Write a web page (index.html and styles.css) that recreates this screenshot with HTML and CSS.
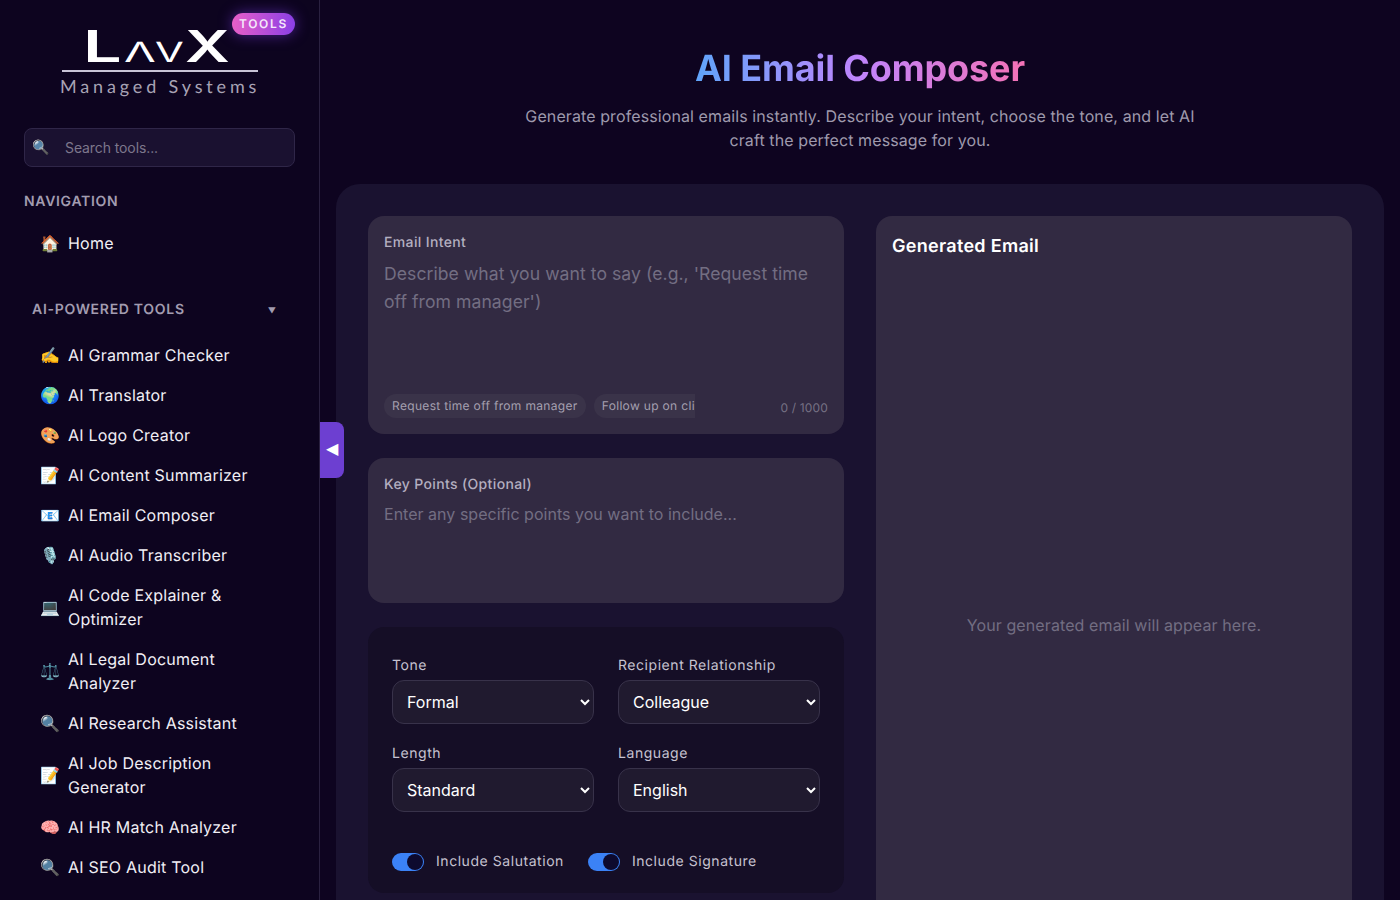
FILE: index.html
```html
<!DOCTYPE html>
<html lang="en">
  <head>
    <title>AI Email Composer</title>
    <meta name="viewport" content="width=device-width, initial-scale=1.0" />
    <link rel="stylesheet" href="styles.css">
  </head>
  <body>
    <div class="app">
      <aside class="sidebar">
        <div class="brand">
          <svg class="brand-mark" width="198" height="40" viewBox="0 0 198 40" role="img" aria-label="LavX">
            <text x="21" y="34" class="mark-big" textLength="39" lengthAdjust="spacingAndGlyphs">L</text>
            <text x="62" y="34" class="mark-small" textLength="32" lengthAdjust="spacingAndGlyphs">Λ</text>
            <text x="93" y="34" class="mark-small" textLength="29" lengthAdjust="spacingAndGlyphs">V</text>
            <text x="123" y="34" class="mark-big" textLength="45" lengthAdjust="spacingAndGlyphs">X</text>
          </svg>
          <div class="brand-rule"></div>
          <div class="brand-sub">Managed Systems</div>
          <span class="badge">TOOLS</span>
        </div>

        <div class="search">
          <span class="search-icon">🔍</span>
          <input class="search-input" type="text" placeholder="Search tools...">
        </div>

        <h4 class="nav-title">NAVIGATION</h4>
        <ul class="nav-list">
          <li class="nav-item"><span class="nav-icon">🏠</span><span>Home</span></li>
        </ul>

        <div class="nav-group">
          <span>AI-POWERED TOOLS</span>
          <span class="nav-caret">▼</span>
        </div>
        <ul class="nav-list">
          <li class="nav-item"><span class="nav-icon">✍️</span><span>AI Grammar Checker</span></li>
          <li class="nav-item"><span class="nav-icon">🌍</span><span>AI Translator</span></li>
          <li class="nav-item"><span class="nav-icon">🎨</span><span>AI Logo Creator</span></li>
          <li class="nav-item"><span class="nav-icon">📝</span><span>AI Content Summarizer</span></li>
          <li class="nav-item"><span class="nav-icon">📧</span><span>AI Email Composer</span></li>
          <li class="nav-item"><span class="nav-icon">🎙️</span><span>AI Audio Transcriber</span></li>
          <li class="nav-item"><span class="nav-icon">💻</span><span>AI Code Explainer &amp; Optimizer</span></li>
          <li class="nav-item"><span class="nav-icon">⚖️</span><span>AI Legal Document Analyzer</span></li>
          <li class="nav-item"><span class="nav-icon">🔍</span><span>AI Research Assistant</span></li>
          <li class="nav-item"><span class="nav-icon">📝</span><span>AI Job Description Generator</span></li>
          <li class="nav-item"><span class="nav-icon">🧠</span><span>AI HR Match Analyzer</span></li>
          <li class="nav-item"><span class="nav-icon">🔍</span><span>AI SEO Audit Tool</span></li>
        </ul>
      </aside>

      <button class="sidebar-toggle" type="button" aria-label="Collapse sidebar">◀</button>

      <main class="main">
        <header class="page-head">
          <h1 class="page-title"><span>AI Email Composer</span></h1>
          <p class="page-sub">Generate professional emails instantly. Describe your intent, choose the tone, and let AI craft the perfect message for you.</p>
        </header>

        <section class="panel">
          <div class="col">
            <div class="card card-intent">
              <label class="field-label">Email Intent</label>
              <textarea class="intent-text" placeholder="Describe what you want to say (e.g., 'Request time off from manager')"></textarea>
              <div class="intent-foot">
                <div class="chips">
                  <span class="chip">Request time off from manager</span>
                  <span class="chip">Follow up on client proposal</span>
                </div>
                <span class="counter">0 / 1000</span>
              </div>
            </div>

            <div class="card card-points">
              <label class="field-label">Key Points (Optional)</label>
              <textarea class="points-text" placeholder="Enter any specific points you want to include..."></textarea>
            </div>

            <div class="options">
              <div class="options-grid">
                <div>
                  <label class="opt-label">Tone</label>
                  <select class="opt-select"><option>Formal</option><option>Friendly</option></select>
                </div>
                <div>
                  <label class="opt-label">Recipient Relationship</label>
                  <select class="opt-select"><option>Colleague</option><option>Manager</option></select>
                </div>
                <div>
                  <label class="opt-label">Length</label>
                  <select class="opt-select"><option>Standard</option><option>Short</option></select>
                </div>
                <div>
                  <label class="opt-label">Language</label>
                  <select class="opt-select"><option>English</option><option>Spanish</option></select>
                </div>
              </div>
              <div class="toggles">
                <div class="toggle-row"><span class="toggle"></span><span>Include Salutation</span></div>
                <div class="toggle-row"><span class="toggle"></span><span>Include Signature</span></div>
              </div>
            </div>
          </div>

          <div class="col">
            <div class="card card-output">
              <h3 class="output-title">Generated Email</h3>
              <div class="output-body">Your generated email will appear here.</div>
            </div>
          </div>
        </section>
      </main>
    </div>
  </body>
</html>
```

FILE: styles.css
```css
* {
  box-sizing: border-box;
}

html,
body {
  margin: 0;
  height: 100%;
  overflow: hidden;
}

body {
  background: #0e0420;
  color: #fff;
  font-family: Inter, "Noto Sans", sans-serif;
  letter-spacing: 0.16px;
  text-rendering: geometricPrecision;
}

ul {
  list-style: none;
  margin: 0;
  padding: 0;
}

.app {
  display: flex;
  height: 100vh;
  position: relative;
}

/* sidebar */
.sidebar {
  width: 320px;
  flex: none;
  height: 100vh;
  overflow: hidden;
  padding: 0 24px;
  background: #0d041f;
  border-right: 1px solid #2a2140;
}

.brand {
  position: relative;
  width: 196px;
  margin: 0 0 0 38px;
  padding-top: 28px;
}

.brand-mark {
  display: block;
  overflow: visible;
}

.mark-big,
.mark-small {
  font-family: Inter, sans-serif;
  fill: #fff;
}

.mark-big {
  font-size: 44px;
  font-weight: 600;
}

.mark-small {
  font-size: 28px;
  font-weight: 400;
}

.brand-rule {
  height: 2px;
  margin-top: 2px;
  background: #c9c4d6;
}

.brand-sub {
  margin: 4px 0 0 -2px;
  font-family: Lato, sans-serif;
  font-size: 18px;
  line-height: 20px;
  letter-spacing: 3.85px;
  white-space: nowrap;
  color: #a8a3b5;
}

.badge {
  position: absolute;
  top: 13px;
  right: -37px;
  width: 63px;
  height: 22px;
  border-radius: 11px;
  background: linear-gradient(90deg, #e85fc8, #8a3fe6);
  box-shadow: 0 0 14px rgba(124, 58, 237, 0.55);
  font-size: 12px;
  font-weight: 600;
  line-height: 22px;
  letter-spacing: 1.7px;
  text-align: center;
  color: #f5e9fb;
}

.search {
  display: flex;
  align-items: center;
  height: 39px;
  margin-top: 32px;
  padding-left: 7px;
  background: #1a1130;
  border: 1px solid #2f2648;
  border-radius: 8px;
}

.search-icon {
  width: 33px;
  flex: none;
  font-size: 14px;
}

.search-input {
  flex: 1;
  min-width: 0;
  border: none;
  outline: none;
  background: none;
  padding: 0;
  font: inherit;
  font-size: 14px;
  letter-spacing: -0.1px;
  color: #fff;
}

.search-input::placeholder {
  color: #7d778c;
}

.nav-title {
  margin: 25px 0 11px;
  font-size: 14px;
  font-weight: 600;
  line-height: 20px;
  letter-spacing: 0.7px;
  color: #a29cb0;
}

.nav-item {
  display: flex;
  align-items: center;
  gap: 8px;
  padding: 8px 16px;
  font-size: 16px;
  line-height: 24px;
  letter-spacing: 0.22px;
  color: #f1eff5;
}

.nav-icon {
  width: 20px;
  flex: none;
  text-align: center;
  letter-spacing: 0;
}

.nav-group {
  display: flex;
  justify-content: space-between;
  align-items: center;
  margin: 37px 0 15px;
  padding: 0 19px 0 8px;
  font-size: 14px;
  font-weight: 600;
  line-height: 20px;
  letter-spacing: 0.7px;
  color: #a29cb0;
}

.nav-caret {
  font-size: 8px;
  letter-spacing: 0;
}

.sidebar-toggle {
  position: absolute;
  left: 320px;
  top: 422px;
  width: 24px;
  height: 56px;
  padding: 0 0 3px;
  border: none;
  border-radius: 0 8px 8px 0;
  background: #6d3fd1;
  color: #fff;
  font-size: 16px;
}

/* main column */
.main {
  flex: 1;
  min-width: 0;
  padding: 44px 16px 0;
}

.page-head {
  text-align: center;
}

.page-title {
  margin: 0;
  font-size: 36px;
  font-weight: 700;
  line-height: 48px;
  letter-spacing: -0.1px;
}

.page-title span {
  background: linear-gradient(90deg, #60a5fa, #c084fc, #f472b6);
  -webkit-background-clip: text;
  background-clip: text;
  color: transparent;
}

.page-sub {
  max-width: 672px;
  margin: 12px auto 0;
  font-size: 16px;
  line-height: 24px;
  letter-spacing: 0.1px;
  color: #9f9aad;
}

.panel {
  display: grid;
  grid-template-columns: 1fr 1fr;
  gap: 32px;
  margin-top: 32px;
  padding: 32px;
  border-radius: 24px;
  background: #1a1230;
}

.col {
  display: flex;
  flex-direction: column;
  gap: 24px;
  min-width: 0;
}

.card {
  padding: 16px;
  border-radius: 16px;
  background: #322a42;
}

.field-label {
  display: block;
  margin-top: 1px;
  font-size: 14px;
  font-weight: 500;
  line-height: 20px;
  letter-spacing: 0.36px;
  color: #b4afc0;
}

textarea {
  display: block;
  width: 100%;
  padding: 0;
  border: none;
  outline: none;
  resize: none;
  background: none;
  font: inherit;
  letter-spacing: 0.02px;
  color: #fff;
}

textarea::placeholder {
  color: #736e82;
}

.intent-text {
  height: 120px;
  margin-top: 7px;
  font-size: 17.6px;
  line-height: 28px;
  letter-spacing: 0.05px;
}

.intent-foot {
  display: flex;
  justify-content: space-between;
  align-items: flex-end;
  margin-top: 14px;
}

.chips {
  display: flex;
  gap: 8px;
  width: 311px;
  overflow: hidden;
}

.chip {
  flex: none;
  padding: 0 8px;
  height: 24px;
  border-radius: 12px;
  background: #3a3349;
  font-size: 12px;
  line-height: 24px;
  letter-spacing: 0.33px;
  color: #a5a0b0;
}

.counter {
  font-size: 12px;
  line-height: 20px;
  letter-spacing: 0.15px;
  color: #767184;
}

.points-text {
  height: 85px;
  margin-top: 7px;
  font-size: 16px;
  line-height: 24px;
}

.options {
  padding: 29px 24px 21px;
  border-radius: 16px;
  background: #150e26;
}

.options-grid {
  display: grid;
  grid-template-columns: 1fr 1fr;
  gap: 20px 24px;
}

.opt-label {
  display: block;
  margin-bottom: 4px;
  font-size: 14px;
  line-height: 20px;
  letter-spacing: 0.55px;
  color: #c6c2d0;
}

.opt-select {
  display: block;
  width: 100%;
  height: 44px;
  padding: 0 10px;
  border: 1px solid #38324a;
  border-radius: 12px;
  background: #201a2f;
  font: inherit;
  font-size: 16px;
  letter-spacing: 0;
  color: #fff;
}

.toggles {
  display: flex;
  gap: 24px;
  margin-top: 40px;
}

.toggle-row {
  display: flex;
  align-items: center;
  gap: 12px;
  font-size: 14px;
  line-height: 20px;
  letter-spacing: 0.55px;
  color: #c6c2d0;
}

.toggle {
  position: relative;
  width: 32px;
  height: 18px;
  border-radius: 9px;
  background: #3b82f6;
}

.toggle::after {
  content: "";
  position: absolute;
  top: 1px;
  right: 1px;
  width: 16px;
  height: 16px;
  border-radius: 50%;
  background: #0d0a2e;
}

.output-title {
  margin: 1px 0 0;
  font-size: 18px;
  font-weight: 600;
  line-height: 28px;
  letter-spacing: 0.3px;
}

.output-body {
  display: flex;
  align-items: center;
  justify-content: center;
  height: 728px;
  font-size: 16px;
  letter-spacing: 0.1px;
  color: #736e82;
}
```
